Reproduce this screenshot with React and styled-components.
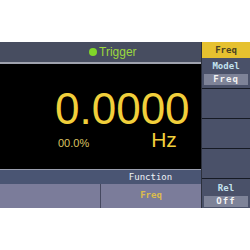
import React from 'react';
import styled, { createGlobalStyle } from 'styled-components';

const GlobalCss = createGlobalStyle`
	body {
		margin: 0;
		background: #ffffff;
	}
`;

const ScreenCss = styled.div`
	margin-top: 42px;
	width: 250px;
	height: 166px;
	display: flex;
`;

const MainCss = styled.div`
	width: 201px;
	display: flex;
	flex-direction: column;
`;

const HeaderCss = styled.div`
	height: 20px;
	background: #474d60;
	border-bottom: 2px solid #9fa2ae;
	display: flex;
	align-items: center;
	gap: 2px;
	padding-left: 89px;
	color: #9bd83e;
	font: 12px 'Liberation Sans', sans-serif;
`;

const DotCss = styled.span`
	width: 8px;
	height: 8px;
	border-radius: 50%;
	background: #80d62a;
`;

const DisplayCss = styled.div`
	height: 105px;
	box-sizing: border-box;
	background: #000;
	padding: 25px 0 0 55px;
	font-family: 'Liberation Sans', sans-serif;
`;

const BigValueCss = styled.div`
	font-size: 44px;
	line-height: 40px;
	color: #f1cf3b;
`;

const SubRowCss = styled.div`
	display: flex;
	align-items: baseline;
`;

const PercentCss = styled.span`
	margin-left: 3px;
	font-size: 11px;
	line-height: 11px;
	color: #dcc262;
`;

const UnitCss = styled.span`
	margin-left: 62px;
	font-size: 21px;
	line-height: 21px;
	color: #f1cf3b;
`;

const SoftKeysCss = styled.div`
	display: grid;
	grid-template-columns: 100px 1fr;
	border-top: 1px solid #9a9eae;
`;

const SoftKeyCss = styled.div`
	display: flex;
	flex-direction: column;
`;

const SoftTitleCss = styled.div`
	height: 14px;
	background: #4a5573;
	color: #eef2f6;
	font: 9px 'DejaVu Sans Mono', monospace;
	line-height: 14px;
	text-align: center;
`;

const SoftValueCss = styled.div`
	height: 24px;
	box-sizing: border-box;
	background: #7b7c9a;
	border-left: ${({ divided }) => (divided ? '1px solid #45485f' : 'none')};
	color: #dcbc4c;
	font: bold 9px 'DejaVu Sans Mono', monospace;
	line-height: 22px;
	text-align: center;
`;

const PanelCss = styled.div`
	width: 48px;
	border-left: 1px solid #2c303c;
	display: flex;
	flex-direction: column;
	font: bold 9px 'DejaVu Sans Mono', monospace;
`;

const PanelHeadCss = styled.div`
	height: 16px;
	background: #e6c12f;
	color: #4a4322;
	line-height: 16px;
	text-align: center;
`;

const PanelCellCss = styled.div`
	height: 30px;
	box-sizing: border-box;
	background: #4a5169;
	border-top: ${({ first }) => (first ? 'none' : '1px solid #161a24')};
	padding-top: ${({ first }) => (first ? 3 : 4)}px;
	display: flex;
	flex-direction: column;
`;

const PanelLabelCss = styled.div`
	height: 10px;
	line-height: 10px;
	color: #c3e2ee;
	text-align: center;
`;

const PanelValueCss = styled.div`
	margin: 3px 2px 0 2px;
	height: 11px;
	line-height: 11px;
	background: #7e8398;
	color: #f2f2f2;
	letter-spacing: 1px;
	text-align: center;
`;

const cells = [
	{ label: 'Model', value: 'Freq' },
	{},
	{},
	{},
	{ label: 'Rel', value: 'Off' },
];

export default function App() {
	return (
		<>
			<GlobalCss />
			<ScreenCss>
				<MainCss>
					<HeaderCss>
						<DotCss />
						Trigger
					</HeaderCss>
					<DisplayCss>
						<BigValueCss>0.0000</BigValueCss>
						<SubRowCss>
							<PercentCss>00.0%</PercentCss>
							<UnitCss>Hz</UnitCss>
						</SubRowCss>
					</DisplayCss>
					<SoftKeysCss>
						<SoftKeyCss>
							<SoftTitleCss />
							<SoftValueCss />
						</SoftKeyCss>
						<SoftKeyCss>
							<SoftTitleCss>Function</SoftTitleCss>
							<SoftValueCss divided>Freq</SoftValueCss>
						</SoftKeyCss>
					</SoftKeysCss>
				</MainCss>
				<PanelCss>
					<PanelHeadCss>Freq</PanelHeadCss>
					{cells.map((cell, i) => (
						<PanelCellCss key={i} first={i === 0}>
							{cell.label && <PanelLabelCss>{cell.label}</PanelLabelCss>}
							{cell.value && <PanelValueCss>{cell.value}</PanelValueCss>}
						</PanelCellCss>
					))}
				</PanelCss>
			</ScreenCss>
		</>
	);
}
